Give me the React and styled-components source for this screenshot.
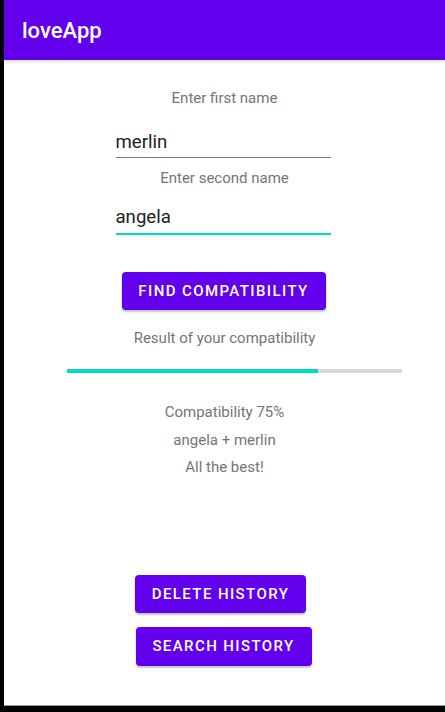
import styled, { createGlobalStyle } from "styled-components";

const GlobalStyle = createGlobalStyle`
  html, body {
    margin: 0;
    padding: 0;
    background: #000;
    font-family: Roboto, "Noto Sans", "Liberation Sans", sans-serif;
  }
  * {
    box-sizing: border-box;
  }
`;

const Screen = styled.div`
  margin-left: 4px;
  width: 441px;
  height: 706px;
  background: #fff;
  border-bottom: 1px solid #9a9a9a;
  display: flex;
  flex-direction: column;
`;

const AppBar = styled.div`
  height: 60px;
  background: #6200ee;
  color: #fff;
  padding: 1px 0 0 18px;
  font-size: 22px;
  font-weight: 500;
  line-height: 59px;
  box-shadow: 0 2px 3px rgba(0, 0, 0, 0.12);
  position: relative;
  z-index: 1;
`;

const Content = styled.div`
  display: flex;
  flex-direction: column;
  align-items: center;
`;

const Label = styled.div`
  margin-top: ${(p) => p.$top}px;
  font-size: 15px;
  line-height: 20px;
  color: #757575;
`;

const Input = styled.input`
  margin-top: ${(p) => p.$top}px;
  margin-left: -3px;
  width: 215px;
  border: none;
  outline: none;
  background: transparent;
  font-family: inherit;
  font-size: 18.6px;
  line-height: 24px;
  height: ${(p) => (p.$focused ? 30 : 28)}px;
  padding: 0 0 ${(p) => (p.$focused ? 4 : 3)}px 0;
  color: #212121;
  border-bottom: ${(p) => (p.$focused ? "2px solid #03dac5" : "1px solid #7a7a7a")};
`;

const Button = styled.button`
  margin-top: ${(p) => p.$top}px;
  margin-left: ${(p) => p.$shift || 0}px;
  width: ${(p) => p.$width}px;
  height: ${(p) => p.$height || 38}px;
  border: none;
  border-radius: 4px;
  background: #6200ee;
  color: #fff;
  font-family: inherit;
  font-size: 15px;
  font-weight: 500;
  letter-spacing: 1.4px;
  text-transform: uppercase;
  padding: 0;
  box-shadow: 0 2px 2px rgba(0, 0, 0, 0.22), 0 0 2px rgba(0, 0, 0, 0.1);
`;

const Caption = styled.div`
  margin-top: 18px;
  font-size: 15px;
  line-height: 20px;
  color: #757575;
`;

const Track = styled.div`
  align-self: stretch;
  margin: 21px 43px 0 63px;
  height: 4px;
  background: #d8d8d8;
`;

const Fill = styled.div`
  height: 100%;
  background: #03dac5;
`;

const Result = styled.div`
  margin-top: 26px;
  display: flex;
  flex-direction: column;
  align-items: center;
  font-size: 15px;
  line-height: 27.5px;
  color: #757575;
`;

const Actions = styled.div`
  margin-top: 93px;
  display: flex;
  flex-direction: column;
  align-items: center;
`;

const App = () => {
  const percent = 75;
  return (
    <>
      <GlobalStyle />
      <Screen>
        <AppBar>loveApp</AppBar>
        <Content>
          <Label $top={28}>Enter first name</Label>
          <Input $top={22} defaultValue="merlin" />
          <Label $top={10}>Enter second name</Label>
          <Input $top={17} $focused defaultValue="angela" />
          <Button $top={37} $width={204} $shift={-2}>Find Compatibility</Button>
          <Caption>Result of your compatibility</Caption>
          <Track>
            <Fill style={{ width: `${percent}%` }} />
          </Track>
          <Result>
            <div>Compatibility {percent}%</div>
            <div>angela + merlin</div>
            <div>All the best!</div>
          </Result>
          <Actions>
            <Button $top={0} $width={171} $shift={-8}>Delete History</Button>
            <Button $top={14} $width={176} $height={39} $shift={-2}>Search History</Button>
          </Actions>
        </Content>
      </Screen>
    </>
  );
};

export default App;
